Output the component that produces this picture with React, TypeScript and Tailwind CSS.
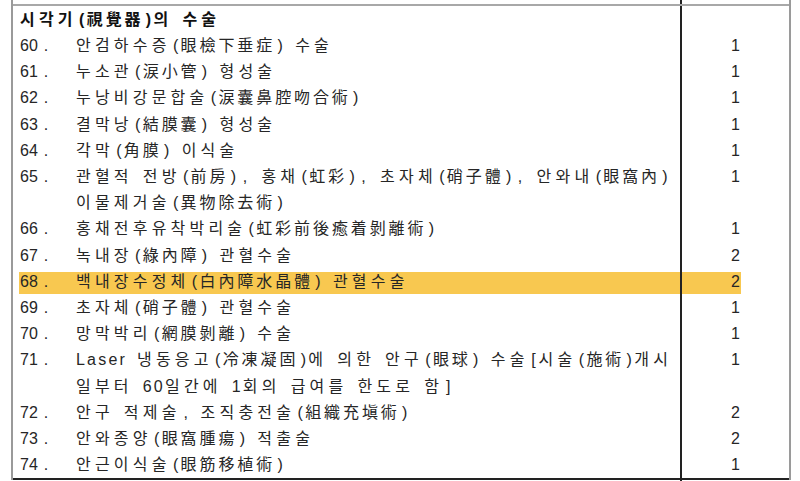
type Line = {
  n?: string;
  lines: string[];
  v?: string;
  hl?: boolean;
  wide?: boolean;
};

const items: Line[] = [
  { n: "60", lines: ["안검하수증(眼檢下垂症) 수술"], v: "1" },
  { n: "61", lines: ["누소관(涙小管) 형성술"], v: "1" },
  { n: "62", lines: ["누낭비강문합술(涙囊鼻腔吻合術)"], v: "1" },
  { n: "63", lines: ["결막낭(結膜囊) 형성술"], v: "1" },
  { n: "64", lines: ["각막(角膜) 이식술"], v: "1" },
  {
    n: "65",
    lines: ["관혈적 전방(前房), 홍채(虹彩), 초자체(硝子體), 안와내(眼窩內)", "이물제거술(異物除去術)"],
    v: "1",
    wide: true,
  },
  { n: "66", lines: ["홍채전후유착박리술(虹彩前後癒着剝離術)"], v: "1" },
  { n: "67", lines: ["녹내장(綠內障) 관혈수술"], v: "2" },
  { n: "68", lines: ["백내장수정체(白內障水晶體) 관혈수술"], v: "2", hl: true },
  { n: "69", lines: ["초자체(硝子體) 관혈수술"], v: "1" },
  { n: "70", lines: ["망막박리(網膜剝離) 수술"], v: "1" },
  {
    n: "71",
    lines: ["Laser 냉동응고(冷凍凝固)에 의한 안구(眼球) 수술[시술(施術)개시", "일부터 60일간에 1회의 급여를 한도로 함]"],
    v: "1",
  },
  { n: "72", lines: ["안구 적제술, 조직충전술(組織充塡術)"], v: "2" },
  { n: "73", lines: ["안와종양(眼窩腫瘍) 적출술"], v: "2" },
  { n: "74", lines: ["안근이식술(眼筋移植術)"], v: "1" },
];

const PUNCT = /^[\s()[\],.]$/;
const LATIN = /^[A-Za-z0-9]+$/;
const HANGUL = /^[\uAC00-\uD7A3]+$/;

// old Gulim print: half-width marks sit in fixed slots, hangul/hanja spaced out evenly
function Txt({ s, wide }: { s: string; wide?: boolean }) {
  const parts = s.split(/([\s()[\],.]|[A-Za-z0-9]+|[\uAC00-\uD7A3]+)/).filter(Boolean);
  return (
    <>
      {parts.map((p, i) => {
        if (PUNCT.test(p)) {
          const cls =
            p === "," && wide ? "inline-block w-[13px] text-center" : "inline-block w-[10px] text-center";
          return (
            <span key={i} className={cls}>
              {p}
            </span>
          );
        }
        if (LATIN.test(p)) {
          return (
            <span key={i} className="tracking-[2.2px]">
              {p}
            </span>
          );
        }
        if (HANGUL.test(p)) {
          return (
            <span key={i} className="tracking-[4.2px]">
              {p}
            </span>
          );
        }
        return (
          <span key={i} className="tracking-[2.9px]">
            {p}
          </span>
        );
      })}
    </>
  );
}

function Row({ item, last }: { item: Line; last: boolean }) {
  return (
    <div className={`relative isolate flex ${last ? "border-b-2 border-[#222]" : ""}`}>
      {item.hl && (
        <span className="absolute left-[6px] top-[3px] z-0 h-[22px] w-[722px] bg-[#f8c850]" />
      )}
      <div className="relative z-10 flex w-[667px] pl-[7px]">
        <div className="flex h-[26.2px] w-[56px] items-center">
          <span>{item.n}</span>
          <span className="ml-[6px]">.</span>
        </div>
        <div className="flex flex-col">
          {item.lines.map((l) => (
            <div key={l} className="flex h-[26.2px] items-center whitespace-pre">
              <span>
                <Txt s={l} wide={item.wide} />
              </span>
            </div>
          ))}
        </div>
      </div>
      <div className="relative z-10 flex flex-1 justify-center border-l-2 border-[#222]">
        <div className="flex h-[26.2px] items-center">{item.v}</div>
      </div>
    </div>
  );
}

export default function App() {
  return (
    <div className="h-[481px] w-[800px] overflow-hidden bg-white font-['Liberation_Sans','Noto_Sans_CJK_KR',sans-serif] text-[16px] text-[#262626]">
      <div className="ml-[11px] w-[780px] border-x-2 border-[#9a9a9a]">
        <div className="flex h-[4px] items-end overflow-hidden">
          <div className="flex w-[667px] shrink-0 pl-[7px]">
            <div className="flex h-[26px] items-center whitespace-pre pl-[56px] tracking-[3.5px] text-[#555]">
              안검(眼瞼)의 재건술(再建術), 누관(涙管) 및 결막(結膜)의 수술
            </div>
          </div>
          <div className="h-full flex-1 border-l-2 border-[#222]" />
        </div>
        <div className="flex border-t-2 border-[#a8a8a8]">
          <div className="flex h-[27px] w-[667px] items-center whitespace-pre pl-[7px] font-bold text-[#111]">
            <span>
              <Txt s="시각기(視覺器)의 수술" />
            </span>
          </div>
          <div className="flex-1 border-l-2 border-[#222]" />
        </div>
        {items.map((it, i) => (
          <Row key={it.n} item={it} last={i === items.length - 1} />
        ))}
      </div>
      <div className="ml-[680px] h-[6px] w-0 border-l-2 border-[#222]" />
    </div>
  );
}
